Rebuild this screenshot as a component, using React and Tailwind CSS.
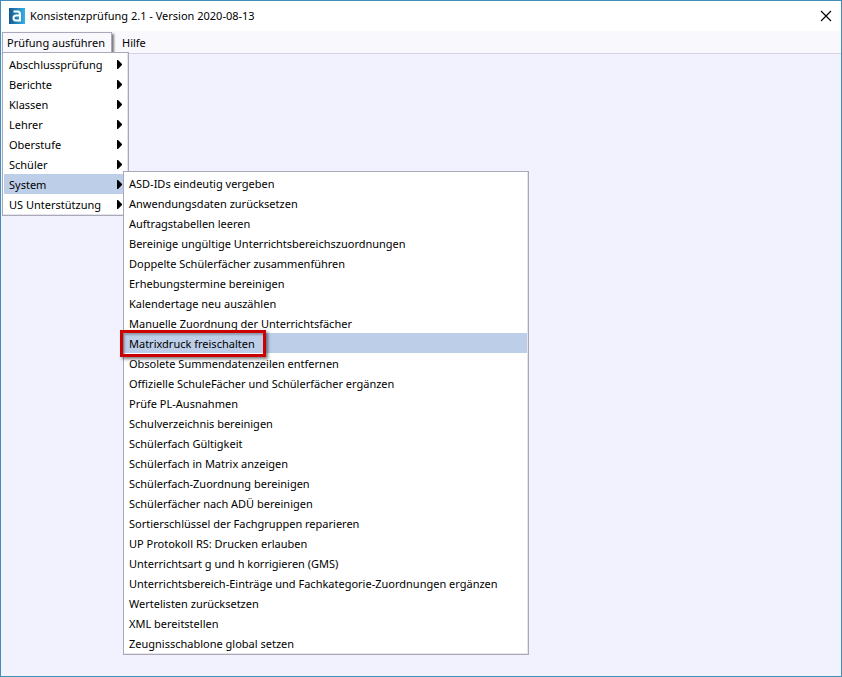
import { useState } from "react";

const categories = [
  "Abschlussprüfung",
  "Berichte",
  "Klassen",
  "Lehrer",
  "Oberstufe",
  "Schüler",
  "System",
  "US Unterstützung",
];

const systemChecks = [
  "ASD-IDs eindeutig vergeben",
  "Anwendungsdaten zurücksetzen",
  "Auftragstabellen leeren",
  "Bereinige ungültige Unterrichtsbereichszuordnungen",
  "Doppelte Schülerfächer zusammenführen",
  "Erhebungstermine bereinigen",
  "Kalendertage neu auszählen",
  "Manuelle Zuordnung der Unterrichtsfächer",
  "Matrixdruck freischalten",
  "Obsolete Summendatenzeilen entfernen",
  "Offizielle SchuleFächer und Schülerfächer ergänzen",
  "Prüfe PL-Ausnahmen",
  "Schulverzeichnis bereinigen",
  "Schülerfach Gültigkeit",
  "Schülerfach in Matrix anzeigen",
  "Schülerfach-Zuordnung bereinigen",
  "Schülerfächer nach ADÜ bereinigen",
  "Sortierschlüssel der Fachgruppen reparieren",
  "UP Protokoll RS: Drucken erlauben",
  "Unterrichtsart g und h korrigieren (GMS)",
  "Unterrichtsbereich-Einträge und Fachkategorie-Zuordnungen ergänzen",
  "Wertelisten zurücksetzen",
  "XML bereitstellen",
  "Zeugnisschablone global setzen",
];

function AppIcon() {
  return (
    <svg className="h-4 w-4" viewBox="0 0 16 16" aria-hidden="true">
      <defs>
        <linearGradient id="tile" x1="0" y1="0" x2="1" y2="0">
          <stop offset="0" stopColor="#15598f" />
          <stop offset="1" stopColor="#31b2e6" />
        </linearGradient>
      </defs>
      <rect width="16" height="16" fill="url(#tile)" />
      <path
        d="M4.5 3.5H8.5Q11 3.5 11 6V12.5H7Q4.5 12.5 4.5 10T7 7.5H11"
        fill="none"
        stroke="#fff"
        strokeWidth="2"
      />
    </svg>
  );
}

function TitleBar() {
  return (
    <header className="flex h-[30px] items-center justify-between bg-white pr-2 pb-px pl-2">
      <div className="flex items-center gap-[5px]">
        <AppIcon />
        <h1>Konsistenzprüfung 2.1 - Version 2020-08-13</h1>
      </div>
      <button type="button" aria-label="Schließen" className="p-px">
        <svg className="h-3 w-3" viewBox="0 0 12 12" aria-hidden="true">
          <path d="M1 1L11 11M11 1L1 11" stroke="#000" strokeWidth="1.1" />
        </svg>
      </button>
    </header>
  );
}

function Arrow() {
  return (
    <svg className="h-[9px] w-[5px]" viewBox="0 0 5 9" aria-hidden="true">
      <path d="M0 0H1L5 4V5L1 9H0Z" fill="#000" />
    </svg>
  );
}

function SystemMenu({ selected, onSelect }) {
  return (
    <ul
      role="menu"
      className="absolute -top-[3px] left-[119px] z-10 w-[406px] border border-[#a9a9bb] bg-white py-px pr-px shadow-[inset_-1px_-1px_0_#e4e4ea]"
    >
      {systemChecks.map((name) => (
        <li key={name} role="none" className="relative">
          <button
            type="button"
            role="menuitem"
            onClick={() => onSelect(name)}
            className={
              name === selected
                ? "block h-5 w-full bg-[#bdcee8] pl-[5px] text-left leading-[22px] whitespace-nowrap"
                : "block h-5 w-full pl-[5px] text-left leading-[22px] whitespace-nowrap"
            }
          >
            {name}
          </button>
          {name === selected && (
            <span className="pointer-events-none absolute -top-[3px] -left-1 h-[27px] w-[146px] border-3 border-[#cb0000] shadow-[2px_2px_3px_rgba(0,0,0,0.5),inset_2px_2px_2px_rgba(0,0,0,0.25)]" />
          )}
        </li>
      ))}
    </ul>
  );
}

function CheckMenu() {
  const [category, setCategory] = useState("System");
  const [check, setCheck] = useState("Matrixdruck freischalten");

  return (
    <ul
      role="menu"
      className="absolute top-[19px] -left-px w-[127px] border border-[#a9a9bb] bg-white p-px shadow-[inset_-1px_-1px_0_#e4e4ea]"
    >
      {categories.map((name) => (
        <li key={name} role="none" className="relative">
          <button
            type="button"
            role="menuitem"
            aria-haspopup="menu"
            onClick={() => setCategory(name)}
            className={
              name === category
                ? "flex h-5 w-full items-center justify-between bg-[#bdcee8] pt-px pr-[5px] pl-[5px] leading-[21px] whitespace-nowrap"
                : "flex h-5 w-full items-center justify-between pt-px pr-[5px] pl-[5px] leading-[21px] whitespace-nowrap"
            }
          >
            {name}
            <Arrow />
          </button>
          {name === "System" && category === "System" && (
            <SystemMenu selected={check} onSelect={setCheck} />
          )}
        </li>
      ))}
    </ul>
  );
}

function MenuBar() {
  const [open, setOpen] = useState(true);

  return (
    <nav className="flex h-[23px] border-b border-[#d3d3e3] bg-[#f8f8fd] pt-px pl-px">
      <div className="relative h-[21px] border border-b-0 border-[#a9a9bb] bg-[#f8f8fd] shadow-[2px_2px_2px_rgba(0,0,0,0.5)]">
        <button
          type="button"
          aria-haspopup="menu"
          aria-expanded={open}
          onClick={() => setOpen(!open)}
          className="block h-5 w-[108px] pl-1 text-left whitespace-nowrap"
        >
          Prüfung ausführen
        </button>
        {open && <CheckMenu />}
      </div>
      <button type="button" className="h-[21px] px-[10px]">
        Hilfe
      </button>
    </nav>
  );
}

function App() {
  return (
    <div className="flex min-h-screen flex-col border border-[#3f8fba] bg-[#f2f2fe] font-['Noto_Sans','Open_Sans',sans-serif] text-[11px] leading-5 text-black">
      <TitleBar />
      <MenuBar />
      <main className="flex-1" />
    </div>
  );
}

export default App;
